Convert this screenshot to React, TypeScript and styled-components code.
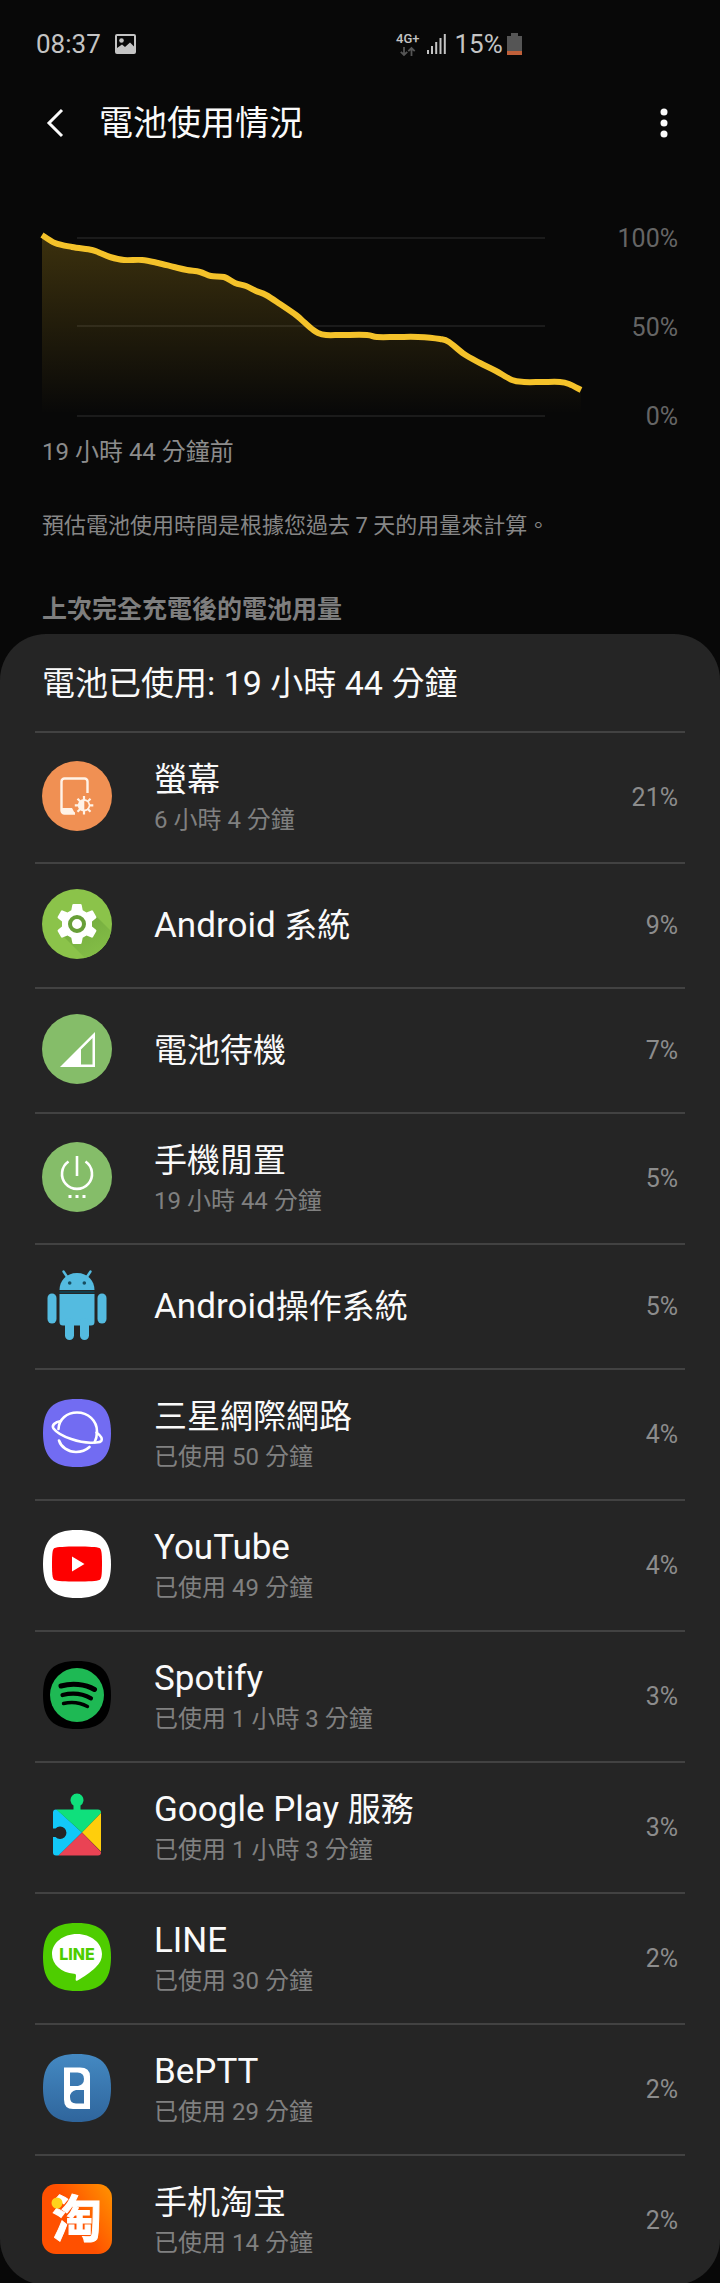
import React, { ReactNode } from 'react';
import styled, { createGlobalStyle } from 'styled-components';

const Global = createGlobalStyle`
  * { box-sizing: border-box; }
  body {
    margin: 0;
    background: #080808;
    font-family: Roboto, "Noto Sans CJK TC", sans-serif;
    color: #fafafa;
  }
  button { border: 0; padding: 0; background: none; color: inherit; font: inherit; display: flex; }
  h1, h2, p, ul { margin: 0; padding: 0; font-weight: 400; }
  svg { display: block; flex: none; overflow: visible; }
`;

const Screen = styled.div`
  display: flex;
  flex-direction: column;
`;

const StatusBar = styled.div`
  display: grid;
  grid-template-columns: 5fr 4fr;
  align-items: center;
  height: 88px;
  padding: 0 36px;
  color: #c4c4c4;
  font-size: 26px;
  line-height: 32px;
`;

const StatusGroup = styled.div`
  display: flex;
  align-items: center;
  gap: 14px;
`;

const StatusIcons = styled.div`
  display: flex;
  align-items: center;
  gap: 8px;
`;

const Network = styled.div`
  display: flex;
  flex-direction: column;
  align-items: center;
  gap: 2px;
  font-size: 13px;
  line-height: 12px;
  font-weight: 500;
`;

const Level = styled.div`
  display: flex;
  align-items: center;
  gap: 4px;
`;

const Header = styled.header`
  display: flex;
  align-items: center;
  height: 70px;
  padding: 0 49px 0 46px;
`;

const Title = styled.h1`
  flex: 1;
  padding-left: 35px;
  font-size: 34px;
  line-height: 50px;
`;

const ChartArea = styled.section`
  display: flex;
  justify-content: space-between;
  padding: 66px 42px 0;
`;

const Scale = styled.div`
  display: flex;
  flex-direction: column;
  justify-content: space-between;
  height: 208px;
  text-align: right;
  font-size: 25px;
  line-height: 30px;
  color: #656565;
`;

const Since = styled.p`
  padding: 2px 42px 0;
  font-size: 24px;
  line-height: 36px;
  color: #8c8c8c;
`;

const Note = styled.p`
  padding: 39px 42px 0;
  font-size: 22px;
  line-height: 34px;
  color: #868686;
`;

const SectionTitle = styled.h2`
  padding: 49px 42px 6px;
  font-size: 25px;
  line-height: 36px;
  font-weight: 700;
  color: #7e7e7e;
`;

const Card = styled.section`
  padding: 0 35px;
  border-radius: 46px;
  background: #252525;
`;

const CardTitle = styled.h2`
  padding: 25px 7px 23px;
  font-size: 33px;
  line-height: 48px;
`;

const Latin = styled.span`
  font-size: 34px;
`;

const List = styled.ul`
  list-style: none;
`;

const Row = styled.li<{ $compact: boolean }>`
  display: flex;
  align-items: center;
  height: ${p => (p.$compact ? 125 : 131)}px;
  padding: 0 7px;
  border-top: 2px solid #424242;
`;

const IconSlot = styled.div`
  padding-bottom: 3px;
`;

const Texts = styled.div`
  flex: 1;
  padding: 1px 0 0 42px;
`;

const Name = styled.div`
  font-size: 33px;
  line-height: 44px;

  ${Latin} { font-size: 35px; }
`;

const Detail = styled.div`
  font-size: 24px;
  line-height: 36px;
  color: #808080;
`;

const Percent = styled.div`
  font-size: 25px;
  line-height: 30px;
  color: #8c8c8c;
`;

/* Latin letters and digits are set slightly larger than the Chinese characters beside them. */
const Mixed = ({ text }: { text: string }) => (
  <>
    {text.split(/([\x20-\x7e]+)/).map((run, i) => (i % 2 ? <Latin key={i}>{run}</Latin> : run))}
  </>
);

const Icon = ({ children }: { children: ReactNode }) => (
  <svg width="70" height="70" viewBox="0 0 70 70" aria-hidden="true">{children}</svg>
);

const squircle = 'M35 1C59 1 69 11 69 35S59 69 35 69 1 59 1 35 11 1 35 1Z';

const ScreenIcon = () => (
  <Icon>
    <circle cx="35" cy="35" r="35" fill="#f09053" />
    <path d="M45.500 32V20.500a3 3 0 0 0-3-3h-20a3 3 0 0 0-3 3v29a3 3 0 0 0 3 3H33" fill="none" stroke="#fff3e8" strokeWidth="2.400" />
    <path d="M20 47h10l3 5.500H23q-3 0-3-3z" fill="#fff3e8" />
    <path d="M42 35v18.500M32.800 44.300h18.500M35.500 37.800l13 13M48.500 37.800l-13 13" stroke="#fff3e8" strokeWidth="2.200" />
    <circle cx="42" cy="44.300" r="6.200" fill="#fff3e8" />
    <path d="M42.300 40a4.300 4.300 0 0 1 0 8.600z" fill="#f09053" />
  </Icon>
);

const SystemIcon = () => (
  <Icon>
    <defs>
      <clipPath id="system-disc"><circle cx="35" cy="35" r="35" /></clipPath>
      <linearGradient id="system-shadow" x2=".6" y2="1"><stop stopColor="#71a83c" /><stop offset="1" stopColor="#84be47" /></linearGradient>
    </defs>
    <circle cx="35" cy="35" r="35" fill="#8bc34a" />
    <path d="M19 45L45 71H72V45L53 26z" fill="url(#system-shadow)" clipPath="url(#system-disc)" />
    <path d="M31.500 15h7q1 0 1.200 1l1 5.200 3.800 2.200 5-2q1-.3 1.500.6l3.300 5.700q.4.800-.3 1.500l-4 3.300v5l4 3.300q.7.700.3 1.500L51 48q-.5.900-1.500.600l-5-2-3.800 2.200-1 5q-.2 1.200-1.200 1.200h-7q-1 0-1.200-1.200l-1-5-3.800-2.200-5 2q-1 .3-1.500-.6l-3.300-5.700q-.4-.8.3-1.500l4-3.300v-5l-4-3.300q-.7-.7-.3-1.500L19 22q.5-.9 1.500-.6l5 2 3.800-2.200 1-5.200q.2-1 1.200-1z" fill="#fff" />
    <circle cx="35" cy="35" r="7" fill="#fff" stroke="#689f38" strokeWidth="4" />
  </Icon>
);

const StandbyIcon = () => (
  <Icon>
    <circle cx="35" cy="35" r="35" fill="#85bd69" />
    <path d="M18 53L53 18V53ZM39 35.500V50.500H50.500V24Z" fill="#fff" fillRule="evenodd" />
  </Icon>
);

const IdleIcon = () => (
  <Icon>
    <circle cx="35" cy="35" r="35" fill="#85bd69" />
    <path d="M35 14V34M26.500 19.500A15 15 0 1 0 43.500 19.500" fill="none" stroke="#fff" strokeWidth="2.600" />
    <path d="M26.500 53h3v3h-3zM33.500 53h3v3h-3zM40.500 53h3v3h-3z" fill="#fff" />
  </Icon>
);

const AndroidIcon = () => (
  <Icon>
    <g fill="#54bbe0">
      <path d="M17.500 20C17.500 11 24 3 35 3s17.500 8 17.500 17z" />
      <path d="M17.500 24h35v28a3.500 3.500 0 0 1-3.500 3.500h-28a3.500 3.500 0 0 1-3.500-3.500z" />
      <rect x="5.500" y="23.500" width="9" height="30" rx="4.500" />
      <rect x="55.500" y="23.500" width="9" height="30" rx="4.500" />
      <rect x="23" y="48" width="9" height="22" rx="4.500" />
      <rect x="38" y="48" width="9" height="22" rx="4.500" />
    </g>
    <path d="M21.500 1.500l4 6M48.500 1.500l-4 6" stroke="#54bbe0" strokeWidth="2.400" strokeLinecap="round" />
    <path d="M17.500 22h35" stroke="#123c4b" strokeWidth="2" />
    <circle cx="27.700" cy="13" r="1.800" fill="#174d60" />
    <circle cx="42.300" cy="13" r="1.800" fill="#174d60" />
  </Icon>
);

const InternetIcon = () => (
  <Icon>
    <path d={squircle} fill="#726cf2" />
    <g fill="none" stroke="#fff" strokeWidth="2.600" strokeLinecap="round">
      <path d="M16.500 31C17 21 25 14.500 35 14.500c11 0 20 8 20 19 0 4-1 8-2.500 11C39 46 17.500 38.500 11.500 30.500c-2-3 1-6.500 7.500-7.500" />
      <path d="M54.500 34.500c4 3 6 6 5 8.200-.8 1.500-3.500 2-7 1.800" />
      <path d="M17 42.500C19 49 26 54 34 54c5.500 0 10-1.800 13.500-5" />
    </g>
  </Icon>
);

const YouTubeIcon = () => (
  <Icon>
    <path d={squircle} fill="#fff" />
    <path d="M35 17.500c12 0 20 .5 22.500 1.500 1.700 1 2.500 3.500 2.500 16s-.8 15-2.500 16c-2.500 1-10.500 1.500-22.500 1.500S15 52 12.500 51c-1.700-1-2.500-3.500-2.500-16s.8-15 2.500-16c2.500-1 10.500-1.500 22.500-1.500z" fill="#fe0000" />
    <path d="M30 27.500L42.500 35 30 42.500z" fill="#fff" />
  </Icon>
);

const SpotifyIcon = () => (
  <Icon>
    <path d={squircle} fill="#000" />
    <circle cx="35" cy="35" r="27" fill="#1eb954" />
    <g fill="none" stroke="#000" strokeLinecap="round">
      <path d="M19 26c11-3 24-2 33.500 3.500" strokeWidth="5" />
      <path d="M20.500 35c10-2.500 20-1.500 28.500 3.300" strokeWidth="4.200" />
      <path d="M21.500 43.500c8.500-2 16.500-1 24 3" strokeWidth="3.400" />
    </g>
  </Icon>
);

const PlayServicesIcon = () => (
  <Icon>
    <defs>
      <clipPath id="puzzle">
        <path d="M14 18.500H31.500V14.500a6.500 6.500 0 1 1 7 0V18.500H56a3 3 0 0 1 3 3V61.500a3 3 0 0 1-3 3H14a3 3 0 0 1-3-3V46H13.500a6.300 6.300 0 1 0 0-8.500H11V21.500a3 3 0 0 1 3-3Z" />
      </clipPath>
    </defs>
    <g clipPath="url(#puzzle)">
      <path d="M0 5L40 41.500 0 81z" fill="#12c8f8" />
      <path d="M15 0H59V22L40 41.500 15 19z" fill="#0fe07c" />
      <path d="M61 20L40 41.500l21 21z" fill="#ffce0c" />
      <path d="M40 41.500L15 66H64z" fill="#ea4354" />
    </g>
  </Icon>
);

const LineIcon = () => (
  <Icon>
    <path d={squircle} fill="#4ecd00" />
    <path d="M35 12c14 0 25 9 25 20 0 5-2 9-6 13-5 5-13 10.500-18.500 13.500-2 1-2-.5-1.700-2.500.5-3 .3-4-1.800-4.200C19 50.500 10 42.500 10 32c0-11 11-20 25-20z" fill="#fff" />
    <text x="35" y="38" textAnchor="middle" fontFamily="Inter" fontSize="16" fontWeight="800" fill="#4ecd00">LINE</text>
  </Icon>
);

const BePttIcon = () => (
  <Icon>
    <defs>
      <linearGradient id="beptt" x2="0" y2="1"><stop stopColor="#4489c2" /><stop offset="1" stopColor="#2f659c" /></linearGradient>
    </defs>
    <path d={squircle} fill="url(#beptt)" />
    <path d="M22 14.500H38q10 0 10 9V56H31q-9 0-9-9.500ZM28 19.500V33H36q6-1.500 6-7 0-6.500-6.500-6.500ZM42 37H34q-6 1.500-6 7 0 6.500 6 6.500H42Z" fill="#fff" fillRule="evenodd" />
  </Icon>
);

const TaobaoIcon = () => (
  <Icon>
    <defs>
      <linearGradient id="taobao" x1="0" y1=".6" x2="1" y2="0"><stop offset=".4" stopColor="#ff5000" /><stop offset="1" stopColor="#ff9500" /></linearGradient>
    </defs>
    <rect width="70" height="70" rx="14" fill="url(#taobao)" />
    <text x="35" y="53" textAnchor="middle" fontFamily="Noto Sans CJK SC" fontSize="50" fontWeight="700" fill="#fff" stroke="#fff" strokeWidth="1">淘</text>
    <circle cx="15" cy="19" r="5.500" fill="#ffd21c" />
  </Icon>
);

const apps: { name: string; detail?: string; percent: number; icon: () => ReactNode }[] = [
  { name: '螢幕', detail: '6 小時 4 分鐘', percent: 21, icon: ScreenIcon },
  { name: 'Android 系統', percent: 9, icon: SystemIcon },
  { name: '電池待機', percent: 7, icon: StandbyIcon },
  { name: '手機閒置', detail: '19 小時 44 分鐘', percent: 5, icon: IdleIcon },
  { name: 'Android操作系統', percent: 5, icon: AndroidIcon },
  { name: '三星網際網路', detail: '已使用 50 分鐘', percent: 4, icon: InternetIcon },
  { name: 'YouTube', detail: '已使用 49 分鐘', percent: 4, icon: YouTubeIcon },
  { name: 'Spotify', detail: '已使用 1 小時 3 分鐘', percent: 3, icon: SpotifyIcon },
  { name: 'Google Play 服務', detail: '已使用 1 小時 3 分鐘', percent: 3, icon: PlayServicesIcon },
  { name: 'LINE', detail: '已使用 30 分鐘', percent: 2, icon: LineIcon },
  { name: 'BePTT', detail: '已使用 29 分鐘', percent: 2, icon: BePttIcon },
  { name: '手机淘宝', detail: '已使用 14 分鐘', percent: 2, icon: TaobaoIcon },
];

const points: [number, number][] = [
  [0, 11], [13, 19], [30, 23], [50, 26], [58, 29], [68, 33], [82, 36], [100, 36], [116, 39], [132, 43],
  [145, 46], [158, 48], [169, 52], [182, 53], [193, 59], [204, 62], [214, 67], [224, 71], [238, 80],
  [254, 91], [262, 98], [270, 105], [276, 109], [284, 111], [300, 111], [325, 111], [335, 113], [355, 113],
  [376, 113], [398, 115], [407, 118], [422, 130], [438, 139], [454, 147], [470, 156], [482, 158],
  [500, 158], [518, 158], [527, 160], [539, 166],
];

/* Joins the readings with a smooth line whose tangent at each one follows its two neighbours. */
const smooth = (p: [number, number][]) =>
  p.slice(1).reduce((d, [x, y], i) => {
    const [ax, ay] = p[Math.max(i - 1, 0)];
    const [bx, by] = p[i];
    const [cx, cy] = p[Math.min(i + 2, p.length - 1)];
    return `${d}C${bx + (x - ax) / 6} ${by + (y - ay) / 6} ${x - (cx - bx) / 6} ${y - (cy - by) / 6} ${x} ${y}`;
  }, `M${p[0][0]} ${p[0][1]}`);

const Chart = () => {
  const line = smooth(points);
  return (
    <svg width="545" height="208" viewBox="0 0 545 208" role="img" aria-label="電池電量">
      <defs>
        <linearGradient id="charge" x2="0" y2="1">
          <stop stopColor="#f4c222" stopOpacity=".22" />
          <stop offset="1" stopColor="#f4c222" stopOpacity="0" />
        </linearGradient>
      </defs>
      <path d="M35 14H503M35 102H503M35 192H503" stroke="#1b1b1b" strokeWidth="2" />
      <path d={`${line}V190H0Z`} fill="url(#charge)" />
      <path d={line} fill="none" stroke="#f4c22a" strokeWidth="6" />
    </svg>
  );
};

export default function App() {
  return (
    <Screen>
      <Global />
      <StatusBar>
        <StatusGroup>
          <span>08:37</span>
          <svg width="21" height="20" viewBox="0 0 21 20">
            <path d="M2 0H19a2 2 0 0 1 2 2V18a2 2 0 0 1-2 2H2a2 2 0 0 1-2-2V2a2 2 0 0 1 2-2ZM2 2V14l5-3.500 3 2.500 5-4.500 4 4V2Z" fill="#c4c4c4" fillRule="evenodd" />
            <circle cx="6.500" cy="6.500" r="2.300" fill="#c4c4c4" />
          </svg>
        </StatusGroup>
        <StatusIcons>
          <Network>
            <span>4G+</span>
            <svg width="15" height="9" viewBox="0 0 15 9" fill="none" stroke="#555" strokeWidth="1.800">
              <path d="M4 0V8M.8 4.800L4 8l3.200-3.200M11.500 9V1M8.300 4.200L11.500 1l3.200 3.200" />
            </svg>
          </Network>
          <svg width="19" height="20" viewBox="0 0 19 20" fill="#c4c4c4">
            <path d="M0 16h2v4H0zM4 12h2v8H4zM8.200 8h2v12h-2zM12.500 4h2v16h-2zM16.800 0h2v20h-2z" />
          </svg>
          <Level>
            <span>15%</span>
            <svg width="15" height="22" viewBox="0 0 15 22">
              <path d="M4 0h7v3H15V22H0V3H4z" fill="#555" />
              <path d="M0 18h15v4H0z" fill="#c0603a" />
            </svg>
          </Level>
        </StatusIcons>
      </StatusBar>
      <Header>
        <button aria-label="返回">
          <svg width="18" height="28" viewBox="0 0 18 28" fill="none" stroke="#fafafa" strokeWidth="3">
            <path d="M16 1L3 14l13 13" />
          </svg>
        </button>
        <Title>電池使用情況</Title>
        <button aria-label="更多選項">
          <svg width="14" height="30" viewBox="0 0 14 30" fill="#fafafa">
            <circle cx="7" cy="4" r="3.500" /><circle cx="7" cy="15" r="3.500" /><circle cx="7" cy="26" r="3.500" />
          </svg>
        </button>
      </Header>
      <ChartArea>
        <Chart />
        <Scale><span>100%</span><span>50%</span><span>0%</span></Scale>
      </ChartArea>
      <Since>19 小時 44 分鐘前</Since>
      <Note>預估電池使用時間是根據您過去 7 天的用量來計算。</Note>
      <SectionTitle>上次完全充電後的電池用量</SectionTitle>
      <Card>
        <CardTitle><Mixed text="電池已使用: 19 小時 44 分鐘" /></CardTitle>
        <List>
          {apps.map(({ name, detail, percent, icon: AppIcon }) => (
            <Row key={name} $compact={!detail}>
              <IconSlot><AppIcon /></IconSlot>
              <Texts>
                <Name><Mixed text={name} /></Name>
                {detail && <Detail>{detail}</Detail>}
              </Texts>
              <Percent>{percent}%</Percent>
            </Row>
          ))}
        </List>
      </Card>
    </Screen>
  );
}
